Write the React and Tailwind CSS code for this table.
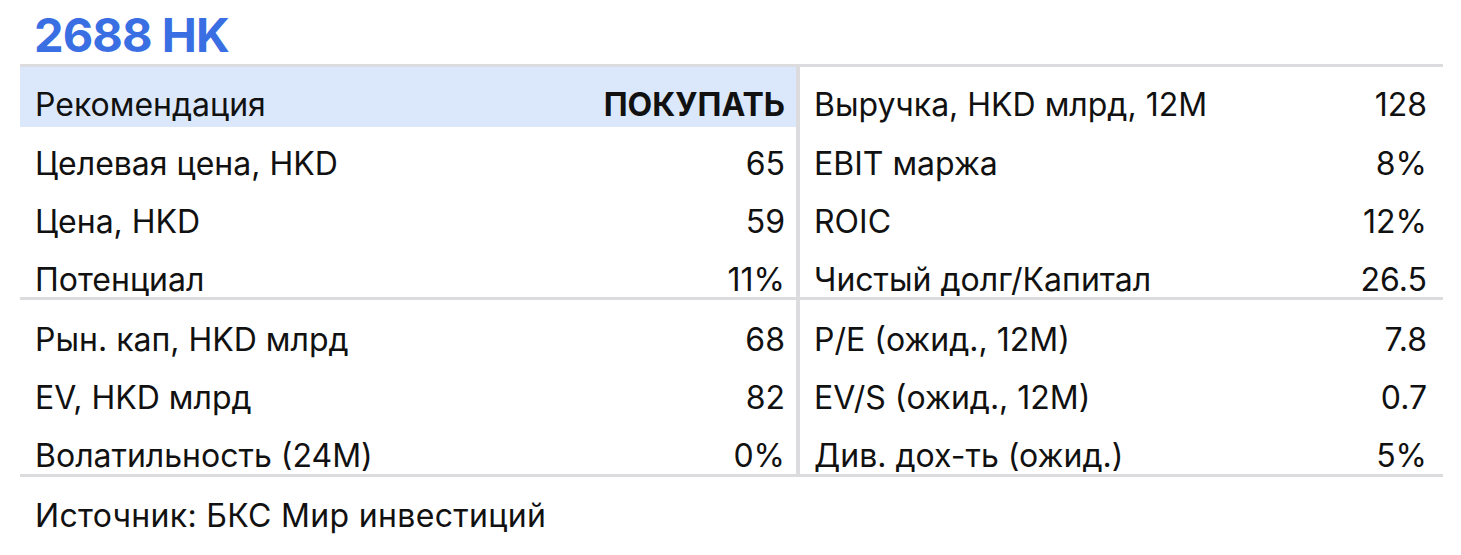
const top = [
  ['Рекомендация', 'ПОКУПАТЬ', 'Выручка, HKD млрд, 12M', '128'],
  ['Целевая цена, HKD', '65', 'EBIT маржа', '8%'],
  ['Цена, HKD', '59', 'ROIC', '12%'],
  ['Потенциал', '11%', 'Чистый долг/Капитал', '26.5'],
];

const bottom = [
  ['Рын. кап, HKD млрд', '68', 'P/E (ожид., 12M)', '7.8'],
  ['EV, HKD млрд', '82', 'EV/S (ожид., 12M)', '0.7'],
  ['Волатильность (24M)', '0%', 'Див. дох-ть (ожид.)', '5%'],
];

// row heights / bottom padding so the baselines sit like the spreadsheet export
const topRows = ['h-[60px] pb-[6px]', 'h-[58px] pb-[5px]', 'h-[58px] pb-[5px]', 'h-[54px] pb-[1px]'];
const bottomRows = ['h-[58px] pb-[2px]', 'h-[58px] pb-[2px]', 'h-[58px] pb-[2px]'];

const Section = ({ rows, sizes, highlightFirst }) => (
  <div className="flex border-b-[3px] border-[#dcdcdf]">
    <div className="w-[776px] flex flex-col">
      {rows.map((r, i) => (
        <div
          key={i}
          className={`${sizes[i]} flex items-end justify-between pl-[15px] pr-[11px] ${
            highlightFirst && i === 0 ? 'bg-[#dbe8fb]' : ''
          }`}
        >
          <span>{r[0]}</span>
          <span className={highlightFirst && i === 0 ? 'font-bold' : ''}>{r[1]}</span>
        </div>
      ))}
    </div>
    <div className="w-[4px] bg-[#dcdcdf]" />
    <div className="flex-1 flex flex-col">
      {rows.map((r, i) => (
        <div key={i} className={`${sizes[i]} flex items-end justify-between pl-[14px] pr-[16px]`}>
          <span>{r[2]}</span>
          <span>{r[3]}</span>
        </div>
      ))}
    </div>
  </div>
);

export default function App() {
  return (
    <div className="w-[1461px] h-[555px] bg-white text-[#111] font-['Inter','Liberation_Sans',sans-serif] text-[32px] leading-none">
      <div className="pl-[34px] pt-[11px] h-[64px] text-[#3a6fe3] text-[47px] font-bold tracking-[-0.02em] leading-none">
        2688 HK
      </div>
      <div className="ml-[20px] w-[1423px]">
        <div className="border-t-[3px] border-[#dcdcdf]">
          <Section rows={top} sizes={topRows} highlightFirst />
        </div>
        <Section rows={bottom} sizes={bottomRows} />
        <div className="pl-[15px] pt-[23px] tracking-[0.01em]">Источник: БКС Мир инвестиций</div>
      </div>
    </div>
  );
}
